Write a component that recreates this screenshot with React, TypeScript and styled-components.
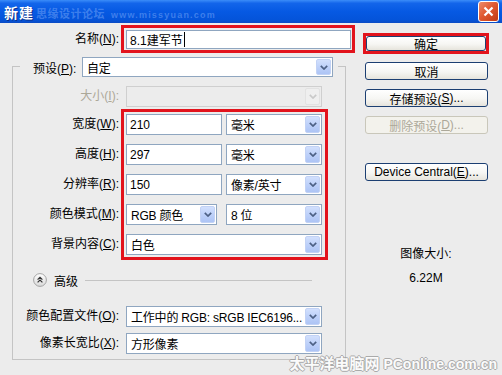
import React from "react";
import styled, { createGlobalStyle } from "styled-components";

const GlobalStyle = createGlobalStyle`
  html, body {
    margin: 0;
    padding: 0;
    background: #ececec;
  }
  body {
    font-family: "Liberation Sans", "Noto Sans CJK SC", sans-serif;
    font-size: 12px;
    color: #000;
  }
`;

const Window = styled.div`
  position: relative;
  width: 502px;
  height: 375px;
  overflow: hidden;
  background: #ececec;
  display: flex;
  flex-direction: column;
`;

const TitleBar = styled.div`
  position: relative;
  flex: none;
  height: 23px;
  display: flex;
  align-items: center;
  padding: 0 3px 0 4px;
  background: linear-gradient(#3b8df9 0%, #1365ea 14%, #0659e3 50%, #0454da 85%, #0a4bc4 100%);
`;

const Title = styled.span`
  position: relative;
  z-index: 1;
  color: #fff;
  font-weight: bold;
  font-size: 14px;
  letter-spacing: 1px;
  text-shadow: 1px 1px 0 #0b2f8a;
`;

const TitleMark = styled.span`
  position: absolute;
  top: 5px;
  left: 36px;
  display: flex;
  align-items: baseline;
  gap: 6px;
  color: rgba(150, 190, 255, 0.4);
  font-size: 11px;
  font-weight: bold;
  letter-spacing: 0.5px;
`;

const TitleMarkUrl = styled.span`
  font-size: 9px;
  letter-spacing: 1.2px;
`;

const CloseButton = styled.div`
  margin-left: auto;
  width: 21px;
  height: 21px;
  box-sizing: border-box;
  border: 1px solid #fff;
  border-radius: 3px;
  background: linear-gradient(135deg, #ec8c6c 0%, #e05a32 45%, #c23a12 100%);
  display: flex;
  align-items: center;
  justify-content: center;
`;

const Body = styled.div`
  flex: 1;
  display: flex;
  padding-top: 2px;
`;

const LeftPane = styled.div`
  flex: none;
  width: 355px;
  display: flex;
  flex-direction: column;
`;

const NameRow = styled.div`
  display: flex;
  align-items: center;
`;

const FieldLabel = styled.span<{ $width: number; $disabled?: boolean }>`
  flex: none;
  width: ${(p) => p.$width}px;
  box-sizing: border-box;
  padding-right: 2px;
  text-align: right;
  white-space: nowrap;
  line-height: 21px;
  color: ${(p) => (p.$disabled ? "#aca899" : "#000")};
`;

const Highlight = styled.div<{ $width: number; $pad: string }>`
  flex: none;
  width: ${(p) => p.$width}px;
  box-sizing: border-box;
  border: 3px solid #e2131c;
  padding: ${(p) => p.$pad};
  display: flex;
  flex-direction: column;
  gap: 9px;
`;

const TextBox = styled.div<{ $width?: number; $height?: number }>`
  ${(p) => (p.$width ? `width: ${p.$width}px; flex: none;` : "flex: 1;")}
  height: ${(p) => p.$height ?? 21}px;
  box-sizing: border-box;
  border: 1px solid #8fa6c0;
  background: #fff;
  padding: 0 3px;
  display: flex;
  align-items: center;
  white-space: nowrap;
`;

const Caret = styled.span`
  width: 1px;
  height: 15px;
  margin-left: 1px;
  background: #000;
`;

const Combo = styled.div<{ $width: number; $height?: number; $disabled?: boolean }>`
  flex: none;
  width: ${(p) => p.$width}px;
  height: ${(p) => p.$height ?? 21}px;
  box-sizing: border-box;
  border: 1px solid ${(p) => (p.$disabled ? "#cfcfcf" : "#8fa6c0")};
  background: ${(p) => (p.$disabled ? "#ececec" : "#fff")};
  display: flex;
`;

const ComboText = styled.span`
  flex: 1;
  min-width: 0;
  padding-left: 4px;
  display: flex;
  align-items: center;
  white-space: nowrap;
  letter-spacing: -0.2px;
`;

const ArrowBox = styled.span<{ $disabled?: boolean }>`
  flex: none;
  width: 15px;
  margin: 1px;
  box-sizing: border-box;
  border-radius: 2px;
  border: 1px solid ${(p) => (p.$disabled ? "#e2e2e2" : "#c2d2f5")};
  background: ${(p) =>
    p.$disabled ? "#efefef" : "linear-gradient(#d2e0fd 0%, #bed1f9 50%, #adc4f5 100%)"};
  display: flex;
  align-items: center;
  justify-content: center;
`;

const GroupBox = styled.div`
  margin: 13px 0 0 12px;
  width: 334px;
  box-sizing: border-box;
  border: 1px solid #c4c4c4;
  padding-bottom: 5px;
  display: flex;
  flex-direction: column;
`;

const GroupHeader = styled.div`
  margin: -10px 0 0 7px;
  width: 318px;
  box-sizing: border-box;
  padding: 0 5px 0 13px;
  background: #ececec;
  display: flex;
  align-items: center;
  gap: 5px;
`;

const PlainLabel = styled.span`
  flex: 1;
  white-space: nowrap;
`;

const FormRow = styled.div<{ $top: number }>`
  display: flex;
  align-items: center;
  margin-top: ${(p) => p.$top}px;
  gap: 5px;
`;

const SplitRow = styled.div`
  display: flex;
  align-items: flex-start;
  margin-top: 2px;
`;

const LabelColumn = styled.div`
  flex: none;
  width: 108px;
  padding-top: 5px;
  display: flex;
  flex-direction: column;
  gap: 9px;
`;

const FieldRow = styled.div`
  display: flex;
  justify-content: space-between;
  height: 21px;
`;

const AdvancedRow = styled.div`
  display: flex;
  align-items: center;
  height: 14px;
  margin-top: 13px;
  padding: 0 33px 0 20px;
  gap: 7px;
`;

const Rule = styled.div`
  flex: 1;
  height: 1px;
  background: #c4c4c4;
`;

const ProfileRows = styled.div`
  display: flex;
  flex-direction: column;
  gap: 6px;
  margin-top: 19px;
`;

const RightPane = styled.div`
  flex: none;
  width: 126px;
  margin-left: 8px;
  padding-top: 8px;
  display: flex;
  flex-direction: column;
`;

const DialogButton = styled.div<{ $top?: number; $disabled?: boolean; $inner?: boolean }>`
  width: ${(p) => (p.$inner ? 120 : 123)}px;
  height: ${(p) => (p.$inner ? 15 : 18)}px;
  margin: ${(p) => (p.$inner ? "0" : `${p.$top ?? 0}px 0 0 2px`)};
  box-sizing: border-box;
  border: 1px solid ${(p) => (p.$disabled ? "#c9c7ba" : "#1c3f72")};
  border-radius: 3px;
  background: ${(p) =>
    p.$disabled ? "#f3f2ec" : "linear-gradient(#ffffff 0%, #f6f6f3 55%, #e6e4dc 100%)"};
  color: ${(p) => (p.$disabled ? "#aca899" : "#000")};
  display: flex;
  align-items: center;
  justify-content: center;
  white-space: nowrap;
`;

const SizeInfo = styled.div`
  margin-top: 66px;
  display: flex;
  flex-direction: column;
  align-items: center;
  gap: 10px;
  line-height: 14px;
`;

const Footer = styled.div`
  position: absolute;
  right: 5px;
  bottom: 2px;
  display: flex;
  align-items: baseline;
  gap: 4px;
  color: #fff;
  font-weight: bold;
  opacity: 0.8;
  text-shadow: 1px 0 0 #9a9a9a, -1px 0 0 #9a9a9a, 0 1px 0 #9a9a9a, 0 -1px 0 #9a9a9a;
`;

const FooterCn = styled.span`
  font-size: 15px;
`;

const FooterEn = styled.span`
  font-size: 14px;
`;

const Chevron = ({ disabled }: { disabled?: boolean }) => (
  <svg width="8" height="5" viewBox="0 0 8 5">
    <path
      d="M0.8 0.8 L4 4 L7.2 0.8"
      fill="none"
      stroke={disabled ? "#c9c9c9" : "#4d6185"}
      strokeWidth="1.7"
    />
  </svg>
);

const Select = ({
  value,
  width,
  height,
  disabled,
}: {
  value: string;
  width: number;
  height?: number;
  disabled?: boolean;
}) => (
  <Combo $width={width} $height={height} $disabled={disabled}>
    <ComboText>{value}</ComboText>
    <ArrowBox $disabled={disabled}>
      <Chevron disabled={disabled} />
    </ArrowBox>
  </Combo>
);

const Key = ({ label, k }: { label: string; k: string }) => (
  <>
    {label}(<u>{k}</u>):
  </>
);

export default function App() {
  return (
    <>
      <GlobalStyle />
      <Window>
        <TitleBar>
          <Title>新建</Title>
          <TitleMark>
            思缘设计论坛<TitleMarkUrl>www.missyuan.com</TitleMarkUrl>
          </TitleMark>
          <CloseButton>
            <svg width="11" height="11" viewBox="0 0 11 11">
              <path d="M1.5 1.5 L9.5 9.5 M9.5 1.5 L1.5 9.5" stroke="#fff" strokeWidth="2.2" />
            </svg>
          </CloseButton>
        </TitleBar>
        <Body>
          <LeftPane>
            <NameRow>
              <FieldLabel $width={121}>
                <Key label="名称" k="N" />
              </FieldLabel>
              <Highlight $width={234} $pad="2px 1px 1px 2px">
                <TextBox $height={22}>
                  8.1建军节
                  <Caret />
                </TextBox>
              </Highlight>
            </NameRow>
            <GroupBox>
              <GroupHeader>
                <PlainLabel>
                  <Key label="预设" k="P" />
                </PlainLabel>
                <Select value="自定" width={251} height={20} />
              </GroupHeader>
              <FormRow $top={9}>
                <FieldLabel $width={108} $disabled>
                  <Key label="大小" k="I" />
                </FieldLabel>
                <Select value="" width={196} disabled />
              </FormRow>
              <SplitRow>
                <LabelColumn>
                  <FieldLabel $width={108}>
                    <Key label="宽度" k="W" />
                  </FieldLabel>
                  <FieldLabel $width={108}>
                    <Key label="高度" k="H" />
                  </FieldLabel>
                  <FieldLabel $width={108}>
                    <Key label="分辨率" k="R" />
                  </FieldLabel>
                  <FieldLabel $width={108}>
                    <Key label="颜色模式" k="M" />
                  </FieldLabel>
                  <FieldLabel $width={108}>
                    <Key label="背景内容" k="C" />
                  </FieldLabel>
                </LabelColumn>
                <Highlight $width={207} $pad="2px 3px 2px 2px">
                  <FieldRow>
                    <TextBox $width={96}>210</TextBox>
                    <Select value="毫米" width={96} />
                  </FieldRow>
                  <FieldRow>
                    <TextBox $width={96}>297</TextBox>
                    <Select value="毫米" width={96} />
                  </FieldRow>
                  <FieldRow>
                    <TextBox $width={96}>150</TextBox>
                    <Select value="像素/英寸" width={96} />
                  </FieldRow>
                  <FieldRow>
                    <Select value="RGB 颜色" width={91} />
                    <Select value="8 位" width={96} />
                  </FieldRow>
                  <FieldRow>
                    <Select value="白色" width={196} />
                  </FieldRow>
                </Highlight>
              </SplitRow>
              <AdvancedRow>
                <svg width="14" height="14" viewBox="0 0 14 14">
                  <defs>
                    <linearGradient id="adv" x1="0" y1="0" x2="0" y2="1">
                      <stop offset="0" stopColor="#ffffff" />
                      <stop offset="1" stopColor="#d8d8d8" />
                    </linearGradient>
                  </defs>
                  <circle cx="7" cy="7" r="6.4" fill="url(#adv)" stroke="#a4a4a4" />
                  <path
                    d="M4.6 6.6 L7 4.3 L9.4 6.6 M4.6 9.4 L7 7.1 L9.4 9.4"
                    fill="none"
                    stroke="#333"
                    strokeWidth="1.2"
                  />
                </svg>
                <span>高级</span>
                <Rule />
              </AdvancedRow>
              <ProfileRows>
                <FormRow $top={0}>
                  <FieldLabel $width={108}>
                    <Key label="颜色配置文件" k="O" />
                  </FieldLabel>
                  <Select value="工作中的 RGB: sRGB IEC6196..." width={196} />
                </FormRow>
                <FormRow $top={0}>
                  <FieldLabel $width={108}>
                    <Key label="像素长宽比" k="X" />
                  </FieldLabel>
                  <Select value="方形像素" width={196} />
                </FormRow>
              </ProfileRows>
            </GroupBox>
          </LeftPane>
          <RightPane>
            <Highlight $width={126} $pad="0">
              <DialogButton $inner>确定</DialogButton>
            </Highlight>
            <DialogButton $top={8}>取消</DialogButton>
            <DialogButton $top={9}>
              存储预设(<u>S</u>)...
            </DialogButton>
            <DialogButton $top={9} $disabled>
              删除预设(<u>D</u>)...
            </DialogButton>
            <DialogButton $top={29}>
              Device Central(<u>E</u>)...
            </DialogButton>
            <SizeInfo>
              <span>图像大小:</span>
              <span>6.22M</span>
            </SizeInfo>
          </RightPane>
        </Body>
        <Footer>
          <FooterCn>太平洋电脑网</FooterCn>
          <FooterEn>PConline.com.cn</FooterEn>
        </Footer>
      </Window>
    </>
  );
}
